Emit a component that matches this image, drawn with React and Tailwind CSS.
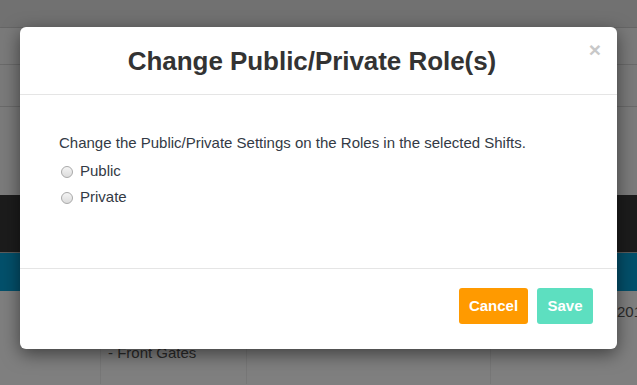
import React from "react";

function Radio({ label }) {
  return (
    <label className="flex items-center gap-[7px] h-[26px]">
      <span className="w-[12px] h-[12px] rounded-full border border-[#a9a9a9] bg-gradient-to-b from-[#f4f4f4] to-[#dcdcdc] ml-[2px]" />
      <span>{label}</span>
    </label>
  );
}

export default function App() {
  return (
    <div className="relative w-[637px] h-[385px] overflow-hidden bg-[#7f7f7f] font-['Liberation_Sans',Arial,sans-serif]">
      {/* page behind the overlay */}
      <div className="flex flex-col">
        <div className="h-[28px] bg-[#717171] border-b border-[#666]" />
        <div className="h-[37px] bg-[#7a7a7a] border-b border-[#6a6a6a]" />
        <div className="h-[42px] bg-[#7a7a7a] border-b border-[#6a6a6a]" />
        <div className="h-[88px] bg-[#7b7b7b]" />
        <div className="h-[58px] bg-[#1c1c1c] border-b border-[#5c5c5c]" />
        <div className="h-[38px] bg-[#03506b]" />
        <div className="flex h-[93px]">
          <div className="w-[101px] shrink-0 border-r border-[#777]" />
          <div className="w-[146px] shrink-0 border-r border-[#777] pl-[7px] pt-[51px] text-[15px] text-[#2a2a2a]">
            - Front Gates
          </div>
          <div className="w-[244px] shrink-0 border-r border-[#777]" />
          <div className="shrink-0 pl-[126px] pt-[10px] text-[15px] text-[#2a2a2a] whitespace-nowrap">2019</div>
        </div>
      </div>

      {/* modal */}
      <div className="absolute inset-0 pt-[27px] px-[20px]">
        <div className="relative bg-white rounded-[6px] shadow-[0_5px_18px_rgba(0,0,0,0.5)] h-[322px] flex flex-col">
          <div className="h-[68px] border-b border-[#e5e5e5] flex items-center justify-center pr-[13px] pt-[2px]">
            <h2 className="text-[26px] font-bold text-[#333] tracking-[-0.05px]">Change Public/Private Role(s)</h2>
          </div>
          <span className="absolute right-[16px] top-[12px] text-[21px] font-bold text-[#c8c8c8] leading-none">×</span>
          <div className="h-[174px] border-b border-[#e5e5e5] pl-[39px] pt-[37px] text-[15px] text-[#333a45]">
            <p className="mb-[4px]">Change the Public/Private Settings on the Roles in the selected Shifts.</p>
            <Radio label="Public" />
            <Radio label="Private" />
          </div>
          <div className="flex justify-end gap-[9px] pr-[24px] pt-[19px]">
            <button className="h-[36px] w-[69px] rounded-[3px] bg-[#ff9a00] text-white text-[15px] font-bold">Cancel</button>
            <button className="h-[36px] w-[56px] rounded-[3px] bg-[#5ddfc0] text-white text-[15px] font-bold">Save</button>
          </div>
        </div>
      </div>
    </div>
  );
}
